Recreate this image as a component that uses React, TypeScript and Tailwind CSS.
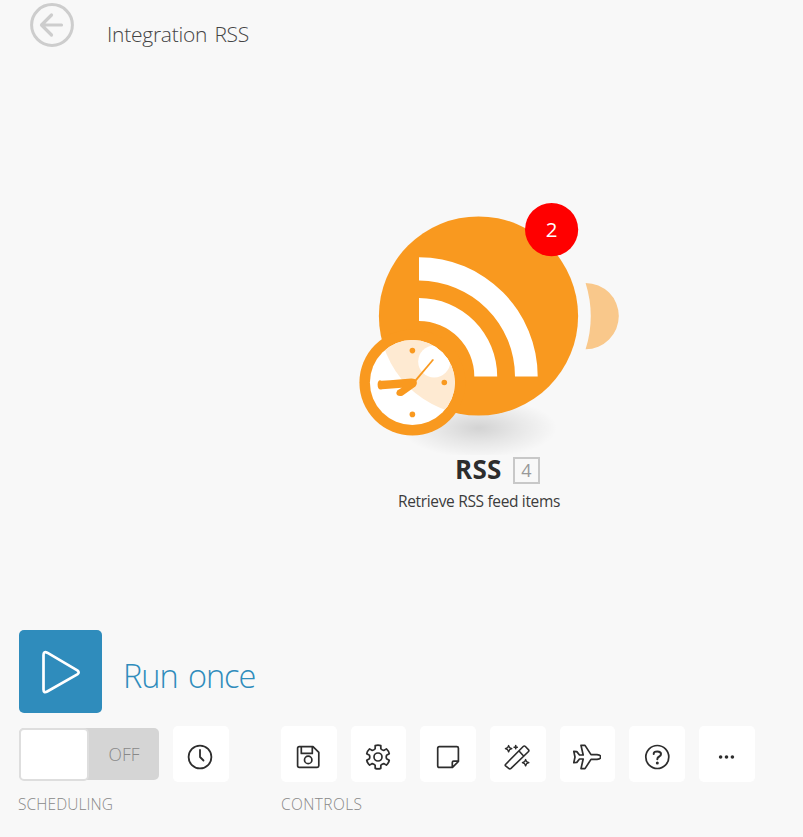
import type { ReactNode } from "react";

const FONT = "font-['Open_Sans','Noto_Sans',sans-serif]";

function polar(r: number, deg: number) {
  const a = ((deg - 90) * Math.PI) / 180;
  return `${(14 + r * Math.cos(a)).toFixed(2)} ${(14 + r * Math.sin(a)).toFixed(2)}`;
}

// Six-tooth gear centred in a 28px box
const gearPath =
  [0, 60, 120, 180, 240, 300]
    .map(
      (t, i) =>
        `${i === 0 ? "M" : "L"}${polar(8.7, t - 19)} L${polar(11.7, t - 14)} Q${polar(12.3, t)} ${polar(11.7, t + 14)} L${polar(8.7, t + 19)} Q${polar(7.9, t + 30)} ${polar(8.7, t + 41)}`,
    )
    .join(" ") + "Z";

function Icon({ children, sw = 1.7 }: { children: ReactNode; sw?: number }) {
  return (
    <svg width="28" height="28" viewBox="0 0 28 28" fill="none" stroke="#2d2d2d" strokeWidth={sw} strokeLinecap="round" strokeLinejoin="round" className="mr-px mt-[5px]">
      {children}
    </svg>
  );
}

function ToolButton({ children, label }: { children: ReactNode; label: string }) {
  return (
    <button aria-label={label} className="flex h-14 w-[55.6px] shrink-0 items-center justify-center rounded-[5px] bg-white">
      {children}
    </button>
  );
}

function ModuleNode() {
  return (
    <svg width="280" height="260" viewBox="350 195 280 260" className="block">
      <defs>
        <radialGradient id="shadow">
          <stop offset="0" stopColor="#000" stopOpacity="0.15" />
          <stop offset="0.5" stopColor="#000" stopOpacity="0.07" />
          <stop offset="1" stopColor="#000" stopOpacity="0" />
        </radialGradient>
        <clipPath id="face">
          <circle cx="412.4" cy="382.5" r="42.5" />
        </clipPath>
      </defs>
      <ellipse cx="479" cy="428" rx="78" ry="30" fill="url(#shadow)" />
      <path d="M585.6 282.9A33.2 33.2 0 0 1 585.6 349.3A111.5 111.5 0 0 0 585.6 282.9Z" fill="#f9c88b" />
      <circle cx="478.5" cy="316" r="99.6" fill="#f9991f" />
      <path d="M419 257.3A118.7 119.2 0 0 1 537.7 376.5H515A96 96 0 0 0 419 280.6Z" fill="#fff" />
      <path d="M419 298A78.2 78.5 0 0 1 497.2 376.5H474.3A55.3 55.5 0 0 0 419 321Z" fill="#fff" />
      <circle cx="412.4" cy="382.5" r="53" fill="#f9991f" />
      <circle cx="412.4" cy="382.5" r="42.5" fill="#fff" />
      <g clipPath="url(#face)">
        <circle cx="478.5" cy="316" r="99.6" fill="#feead2" />
        <circle cx="434.2" cy="361.5" r="16" fill="#fff" />
      </g>
      <g fill="#f9991f">
        <circle cx="412.4" cy="350.6" r="2.8" />
        <circle cx="444.3" cy="382.5" r="2.8" />
        <circle cx="412.4" cy="414.4" r="2.8" />
        <path d="M381.5 380.8C379.5 379 377.6 381 377.6 384.5C377.6 388.5 379 390 382 389.3L401.8 387.8L397.2 390.6Q395.6 393 397 394.9C399 396.6 402 396.4 404.5 394.2L415.4 386.4Q417.8 383.5 416.3 380.2Q415 378.4 411 378.6L390 380.2Z" />
        <path d="M414.3 380.5L432.2 359.4Q433.8 358.4 433.5 360.4L416.4 381Z" />
      </g>
      <circle cx="551.6" cy="229.6" r="26.6" fill="#f00" />
      <text x="551.5" y="236.8" textAnchor="middle" fontSize="20.5" fill="#fff" className={FONT}>2</text>
    </svg>
  );
}

export default function App() {
  return (
    <main className={`flex h-[837px] w-[803px] flex-col overflow-hidden bg-[#f8f8f8] ${FONT}`}>
      <header className="flex h-[195px] items-start pl-[30px] pt-[3px]">
        <svg width="44" height="44" viewBox="0 0 44 44" fill="none" stroke="#cdcdcd" strokeWidth="3" strokeLinecap="round" strokeLinejoin="round">
          <circle cx="22" cy="22" r="20.4" />
          <path d="M31.5 22H12M21.5 12L11.5 22L21.5 32" strokeWidth="3.2" />
        </svg>
        <h1 className="ml-[33px] mt-[16px] whitespace-nowrap text-[21px] font-light leading-[30px] tracking-[-0.25px] text-[#444] [word-spacing:2px]">Integration RSS</h1>
      </header>

      <section className="flex h-[435px] flex-col pl-[350px]">
        <ModuleNode />
        <div className="-mt-px flex h-8 items-center pl-[105px]">
          <h2 className="-mt-[2px] w-[58px] whitespace-nowrap text-[26px] font-bold leading-8 tracking-[0.3px] text-[#2d2d2d]">RSS</h2>
          <span className="flex h-[27px] w-[27px] items-center justify-center border-2 border-[#c8c8c8] text-[18px] leading-none text-[#999]">4</span>
        </div>
        <p className="ml-[48px] mt-[3px] whitespace-nowrap text-[15.5px] leading-6 tracking-[-0.34px] text-[#3c3c3c]">Retrieve RSS feed items</p>
      </section>

      <footer className="pl-[19px]">
        <div className="flex h-[83px]">
          <button aria-label="Run" className="h-[83px] w-[83px] rounded-[5px] bg-[#2f8cbc]">
            <svg width="83" height="83" viewBox="0 0 83 83" fill="none" stroke="#fff" strokeWidth="2.7" strokeLinejoin="round">
              <path d="M24.5 25V59.5Q24.5 63.5 28.2 61.5L58.3 44.4Q61 42.5 58.3 40.4L28.2 22.7Q24.5 21 24.5 25Z" />
            </svg>
          </button>
          <span className="ml-[21px] mt-[24px] whitespace-nowrap text-[32.5px] font-light leading-[44px] tracking-[-1.05px] text-[#2f8cbc] [word-spacing:3px]">Run once</span>
        </div>
        <div className="mt-[13px] flex">
          <div className="flex w-[262px] gap-[14px]">
            <div className="mt-[2px] flex h-[52px] w-[140px] rounded-[5px] bg-[#d5d5d5]">
              <div className="h-[53px] w-[70px] rounded-[5px] border-2 border-[#dedede] bg-white" />
              <span className="flex flex-1 items-center justify-center text-[17.5px] font-light text-[#888]">OFF</span>
            </div>
            <ToolButton label="Schedule">
              <Icon sw={1.8}>
                <circle cx="14" cy="14" r="11.4" />
                <path d="M14 7V14L17.5 17.5" />
              </Icon>
            </ToolButton>
          </div>
          <div className="flex gap-[14.1px]">
            <ToolButton label="Save">
              <Icon>
                <path d="M5.2 3.6H19L24.8 9.4V22.8Q24.8 24.4 23.2 24.4H5.2Q3.6 24.4 3.6 22.8V5.2Q3.6 3.6 5.2 3.6ZM7.3 4V10.4H18.3V4" />
                <circle cx="14.2" cy="16.9" r="3.7" />
              </Icon>
            </ToolButton>
            <ToolButton label="Settings">
              <Icon>
                <path d={gearPath} />
                <circle cx="14" cy="14" r="4" />
              </Icon>
            </ToolButton>
            <ToolButton label="Notes">
              <Icon>
                <path d="M5.4 3.6H22.8Q24.4 3.6 24.4 5.2V18.5L18.5 24.4H5.4Q3.7 24.4 3.7 22.7V5.3Q3.7 3.6 5.4 3.6ZM18.3 24V19.6Q18.3 18.2 19.7 18.2H24" />
              </Icon>
            </ToolButton>
            <ToolButton label="Auto-align">
              <Icon sw={1.6}>
                <path d="M2.5 21.5L20.2 3.5Q21.3 2.4 22.4 3.5L25.4 6.6Q26.4 7.7 25.3 8.8L8 25.4Q6.8 26.5 5.7 25.4L2.6 22.9Q1.8 22.2 2.5 21.5ZM16 8L20.4 12.8" />
                <path d="M5.6 2.5L6.6 4.7L8.8 5.7L6.6 6.7L5.6 8.9L4.6 6.7L2.4 5.7L4.6 4.7ZM22.6 16.5L23.6 18.7L25.8 19.7L23.6 20.7L22.6 22.9L21.6 20.7L19.4 19.7L21.6 18.7Z" strokeWidth="1.35" />
                <path d="M12.7 2.6V5.8M11.1 4.2H14.3" />
              </Icon>
            </ToolButton>
            <ToolButton label="Explain flow">
              <Icon>
                <path d="M.8 8.4L3.8 8.6L6.5 12L10.2 12L8 2.4H12L18 11.6H24Q27.8 12 27.8 14Q27.8 16 24 16.4H18L12 25.6H8L10.2 16L6.5 16L3.8 19.4L.8 19.6L2 14Z" />
              </Icon>
            </ToolButton>
            <ToolButton label="Help">
              <Icon>
                <circle cx="14.3" cy="14" r="11.5" />
                <path d="M10.7 11Q10.6 8.4 14.3 8.4Q18 8.4 18 11Q18 12.5 16.3 13.5Q14.3 14.6 14.3 16.2" strokeWidth="2" />
                <circle cx="14.3" cy="20" r="1.5" fill="#2d2d2d" stroke="none" />
              </Icon>
            </ToolButton>
            <ToolButton label="More">
              <Icon>
                <g fill="#2d2d2d" stroke="none">
                  <circle cx="8.6" cy="14" r="1.8" />
                  <circle cx="14.5" cy="14" r="1.8" />
                  <circle cx="20.4" cy="14" r="1.8" />
                </g>
              </Icon>
            </ToolButton>
          </div>
        </div>
        <div className="mt-[10px] flex text-[15.5px] font-light leading-6 text-[#888]">
          <span className="-ml-px w-[263px] tracking-[0.1px]">SCHEDULING</span>
          <span className="tracking-[0.4px]">CONTROLS</span>
        </div>
      </footer>
    </main>
  );
}
